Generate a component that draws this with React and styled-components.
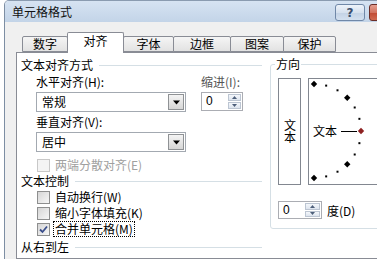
import React from "react";
import styled, { createGlobalStyle } from "styled-components";

const Global = createGlobalStyle`
  html, body { margin: 0; padding: 0; background: #ffffff; overflow: hidden; }
  body {
    font-family: "Noto Sans CJK SC", "DejaVu Sans", sans-serif;
    font-size: 12px;
    color: #000;
  }
  * { box-sizing: border-box; }
`;

const Window = styled.div`
  margin-left: 4px;
  width: 414px;
  height: 259px;
  border-left: 1px solid #7d8ea3;
  border-top: 1px solid #8a9bb0;
  border-top-left-radius: 5px;
  display: flex;
  flex-direction: column;
  overflow: hidden;
`;

const TitleBar = styled.div`
  height: 21px;
  flex: none;
  display: flex;
  align-items: center;
  padding: 0 6px 0 7px;
  background: linear-gradient(#d6e3f2, #c3d4e8);
`;

const Title = styled.div`
  flex: 1;
  line-height: 16px;
  color: #111;
`;

const HelpButton = styled.div`
  width: 30px;
  height: 17px;
  margin-top: 2px;
  border: 1px solid #7088a8;
  border-radius: 3px;
  background: linear-gradient(#eef3fa 0%, #d6e1ee 50%, #c3d2e5 51%, #d3e0ef 100%);
  display: flex;
  align-items: center;
  justify-content: center;
  font-family: "DejaVu Sans", sans-serif;
  font-size: 12px;
  font-weight: bold;
  color: #3a4e6c;
`;

const CloseButton = styled.div`
  width: 43px;
  height: 17px;
  margin: 2px 0 0 4px;
  border: 1px solid #6b2e28;
  border-radius: 3px;
  background: linear-gradient(#e4a092 0%, #d2735f 50%, #c04a33 51%, #d06a50 100%);
`;

const DialogBody = styled.div`
  flex: 1;
  background: #f0f0f0;
  padding: 10px 0 0 11px;
  display: flex;
  flex-direction: column;
`;

const TabRow = styled.div`
  display: flex;
  align-items: flex-end;
  height: 20px;
  padding-left: 6px;
  position: relative;
  z-index: 1;
`;

const Tab = styled.div`
  width: ${(p) => p.$w}px;
  margin-right: -1px;
  height: ${(p) => (p.$active ? 21 : 16)}px;
  margin-bottom: ${(p) => (p.$active ? -1 : 0)}px;
  padding-bottom: ${(p) => (p.$active ? 5 : 0)}px;
  border: 1px solid #898c95;
  border-bottom: ${(p) => (p.$active ? "none" : "1px solid #898c95")};
  border-radius: 2px 2px 0 0;
  background: ${(p) => (p.$active ? "#ffffff" : "linear-gradient(#f5f5f5, #e2e2e2)")};
  display: flex;
  align-items: center;
  justify-content: center;
  line-height: 14px;
  position: relative;
  z-index: ${(p) => (p.$active ? 2 : 1)};
`;

const Panel = styled.div`
  flex: 1;
  background: #ffffff;
  border: 1px solid #898c95;
  border-right: none;
  padding: 5px 0 0 4px;
  display: flex;
`;

const LeftCol = styled.div`
  width: 241px;
  flex: none;
  display: flex;
  flex-direction: column;
`;

const GroupHeader = styled.div`
  display: flex;
  align-items: center;
  gap: 6px;
  height: 14px;
  line-height: 14px;
  margin-top: ${(p) => p.$mt || 0}px;
  white-space: nowrap;
`;

const HeaderLine = styled.div`
  flex: 1;
  height: 1px;
  background: #d5dfe5;
`;

const Indent = styled.div`
  padding-left: 15px;
  display: flex;
  gap: 15px;
`;

const Column = styled.div`
  width: ${(p) => p.$w}px;
  display: flex;
  flex-direction: column;
`;

const FieldLabel = styled.div`
  height: 16px;
  line-height: 16px;
  margin-top: ${(p) => p.$mt || 0}px;
  color: ${(p) => (p.$muted ? "#555" : "#000")};
  white-space: nowrap;
`;

const Select = styled.div`
  height: 20px;
  margin-top: 2px;
  border: 1px solid #a3a9b1;
  background: #fff;
  display: flex;
  align-items: stretch;
  padding: 1px;
`;

const SelectValue = styled.div`
  flex: 1;
  padding-left: 4px;
  line-height: 16px;
`;

const DropButton = styled.div`
  width: 16px;
  border: 1px solid #8f9295;
  background: linear-gradient(#f4f4f4, #d6d6d6);
  display: flex;
  align-items: center;
  justify-content: center;
`;

const Spinner = styled.div`
  width: ${(p) => p.$w}px;
  height: ${(p) => p.$h}px;
  margin-top: ${(p) => p.$mt || 0}px;
  border: 1px solid #abadb3;
  background: #fff;
  display: flex;
  padding: 1px;
`;

const SpinValue = styled.div`
  flex: 1;
  padding-left: 3px;
  line-height: ${(p) => p.$lh}px;
  font-family: "Liberation Sans", sans-serif;
  font-size: 12px;
`;

const SpinButtons = styled.div`
  width: ${(p) => p.$w}px;
  display: flex;
  flex-direction: column;
  gap: 1px;
`;

const SpinHalf = styled.div`
  flex: 1;
  border: 1px solid #bcc5d2;
  background: linear-gradient(#f4f7fb, #dde4ee);
  display: flex;
  align-items: center;
  justify-content: center;
`;

const CheckRow = styled.div`
  height: 16px;
  margin-top: ${(p) => p.$mt || 0}px;
  padding-left: 16px;
  display: flex;
  align-items: center;
  gap: 3px;
  white-space: nowrap;
  color: ${(p) => (p.$disabled ? "#a0a0a0" : "#000")};
`;

const Box = styled.div`
  width: 13px;
  height: 13px;
  flex: none;
  border: 1px solid ${(p) => (p.$disabled ? "#c8c8c8" : "#8e8f8f")};
  background: ${(p) =>
    p.$disabled ? "#f4f4f4" : "linear-gradient(135deg, #d6d6d6, #f7f7f7)"};
  display: flex;
  align-items: center;
  justify-content: center;
`;

const CheckText = styled.span`
  line-height: 14px;
  padding: 0 1px;
  border: 1px ${(p) => (p.$focus ? "dotted #000" : "solid transparent")};
`;

const RightCol = styled.div`
  margin-left: 8px;
  padding-top: 6px;
`;

const GroupBox = styled.div`
  position: relative;
  width: 150px;
  border: 1px solid #d5dfe5;
  border-radius: 3px;
  padding: 13px 0 9px 7px;
`;

const Legend = styled.div`
  position: absolute;
  top: -8px;
  left: 4px;
  padding: 0 1px;
  background: #fff;
  line-height: 14px;
`;

const OrientRow = styled.div`
  display: flex;
  gap: 7px;
`;

const VerticalBox = styled.div`
  width: 23px;
  height: 107px;
  border: 1px solid #828790;
  display: flex;
  align-items: center;
  justify-content: center;
  padding-bottom: 2px;
`;

const VText = styled.span`
  writing-mode: vertical-rl;
  text-orientation: upright;
  line-height: 12px;
`;

const DialBox = styled.div`
  width: 100px;
  height: 107px;
  border: 1px solid #828790;
`;

const DegreeRow = styled.div`
  margin-top: 16px;
  display: flex;
  align-items: center;
  gap: 5px;
`;

const ArrowDown = ({ size = 7, color = "#000" }) => (
  <svg width={size} height={Math.ceil(size / 2) + 1} viewBox="0 0 7 4">
    <polygon points="0,0 7,0 3.5,4" fill={color} />
  </svg>
);

const SmallTri = ({ up }) => (
  <svg width="5" height="3" viewBox="0 0 5 3">
    <polygon points={up ? "0,3 5,3 2.5,0" : "0,0 5,0 2.5,3"} fill="#4d5f7a" />
  </svg>
);

const Tick = () => (
  <svg width="9" height="9" viewBox="0 0 9 9">
    <path d="M1 4.5 L3.5 7 L8 1.5" stroke="#3b4f8c" strokeWidth="1.8" fill="none" />
  </svg>
);

const Dial = () => {
  const cx = 5;
  const cy = 52;
  const r = 47;
  const marks = [];
  for (let a = 90; a >= -90; a -= 15) {
    const rad = (a * Math.PI) / 180;
    const x = cx + r * Math.cos(rad);
    const y = cy - r * Math.sin(rad);
    if (a % 45 === 0) {
      const s = 3.2;
      marks.push(
        <polygon
          key={a}
          points={`${x},${y - s} ${x + s},${y} ${x},${y + s} ${x - s},${y}`}
          fill={a === 0 ? "#8e2222" : "#000"}
        />
      );
    } else {
      marks.push(<rect key={a} x={x - 1} y={y - 1} width="2" height="2" fill="#000" />);
    }
  }
  return (
    <svg width="98" height="105" viewBox="0 0 98 105">
      {marks}
      <text
        x="4"
        y="56.5"
        fontSize="12"
        fontFamily='"Noto Sans CJK SC", sans-serif'
        fill="#000"
      >
        文本
      </text>
      <line x1="32" y1="52.5" x2="48" y2="52.5" stroke="#000" strokeWidth="1" />
    </svg>
  );
};

const tabs = [
  { label: "数字", w: 46 },
  { label: "对齐", w: 57, active: true },
  { label: "字体", w: 51 },
  { label: "边框", w: 58 },
  { label: "图案", w: 54 },
  { label: "保护", w: 53 },
];

export default function App() {
  return (
    <>
      <Global />
      <Window>
        <TitleBar>
          <Title>单元格格式</Title>
          <HelpButton>?</HelpButton>
          <CloseButton />
        </TitleBar>
        <DialogBody>
          <TabRow>
            {tabs.map((t) => (
              <Tab key={t.label} $w={t.w} $active={t.active}>
                {t.label}
              </Tab>
            ))}
          </TabRow>
          <Panel>
            <LeftCol>
              <GroupHeader>
                文本对齐方式
                <HeaderLine />
              </GroupHeader>
              <Indent>
                <Column $w={150}>
                  <FieldLabel $mt={2}>水平对齐(H):</FieldLabel>
                  <Select>
                    <SelectValue>常规</SelectValue>
                    <DropButton>
                      <ArrowDown />
                    </DropButton>
                  </Select>
                  <FieldLabel $mt={2}>垂直对齐(V):</FieldLabel>
                  <Select>
                    <SelectValue>居中</SelectValue>
                    <DropButton>
                      <ArrowDown />
                    </DropButton>
                  </Select>
                </Column>
                <Column $w={45}>
                  <FieldLabel $mt={2} $muted>
                    缩进(I):
                  </FieldLabel>
                  <Spinner $w={42} $h={19} $mt={2}>
                    <SpinValue $lh={15}>0</SpinValue>
                    <SpinButtons $w={13}>
                      <SpinHalf>
                        <SmallTri up />
                      </SpinHalf>
                      <SpinHalf>
                        <SmallTri />
                      </SpinHalf>
                    </SpinButtons>
                  </Spinner>
                </Column>
              </Indent>
              <CheckRow $mt={5} $disabled>
                <Box $disabled />
                <CheckText>两端分散对齐(E)</CheckText>
              </CheckRow>
              <GroupHeader $mt={1}>
                文本控制
                <HeaderLine />
              </GroupHeader>
              <CheckRow $mt={1}>
                <Box />
                <CheckText>自动换行(W)</CheckText>
              </CheckRow>
              <CheckRow>
                <Box />
                <CheckText>缩小字体填充(K)</CheckText>
              </CheckRow>
              <CheckRow>
                <Box>
                  <Tick />
                </Box>
                <CheckText $focus>合并单元格(M)</CheckText>
              </CheckRow>
              <GroupHeader $mt={3}>
                从右到左
                <HeaderLine />
              </GroupHeader>
            </LeftCol>
            <RightCol>
              <GroupBox>
                <Legend>方向</Legend>
                <OrientRow>
                  <VerticalBox>
                    <VText>文本</VText>
                  </VerticalBox>
                  <DialBox>
                    <Dial />
                  </DialBox>
                </OrientRow>
                <DegreeRow>
                  <Spinner $w={44} $h={18}>
                    <SpinValue $lh={14}>0</SpinValue>
                    <SpinButtons $w={15}>
                      <SpinHalf>
                        <SmallTri up />
                      </SpinHalf>
                      <SpinHalf>
                        <SmallTri />
                      </SpinHalf>
                    </SpinButtons>
                  </Spinner>
                  <span>度(D)</span>
                </DegreeRow>
              </GroupBox>
            </RightCol>
          </Panel>
        </DialogBody>
      </Window>
    </>
  );
}
